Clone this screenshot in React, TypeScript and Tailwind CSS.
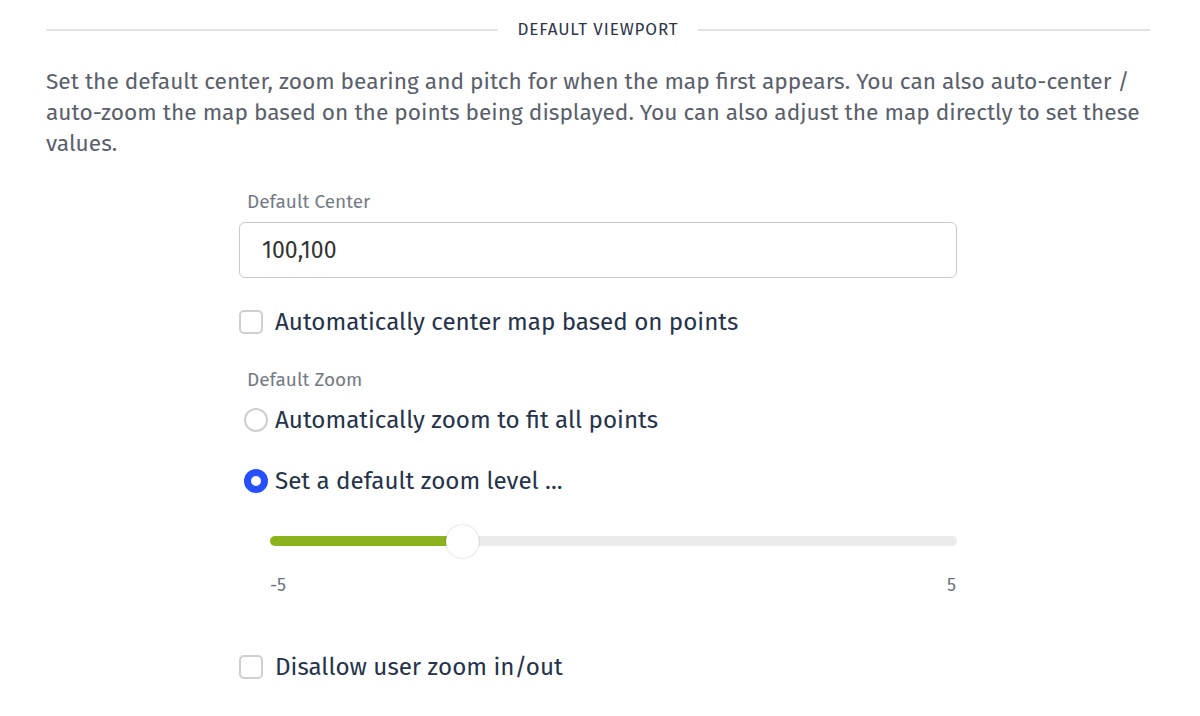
import { useState } from 'react';

const FONT = "font-['Fira_Sans','Noto_Sans','Open_Sans',sans-serif]";

function Checkbox({ label, checked, onChange }: { label: string; checked: boolean; onChange: () => void }) {
  return (
    <label className="flex items-center cursor-pointer select-none">
      <span
        onClick={onChange}
        className={`w-[24px] h-[24px] rounded-[5px] border-2 ${checked ? 'bg-[#2650ff] border-[#2650ff]' : 'bg-white border-[#cfcfcf]'}`}
      />
      <span className="ml-[12px] text-[24.2px] leading-[28px] text-[#26334a]">{label}</span>
    </label>
  );
}

function Radio({ label, checked, onChange }: { label: string; checked: boolean; onChange: () => void }) {
  return (
    <label className="flex items-center cursor-pointer select-none" onClick={onChange}>
      <span
        className={`ml-[5px] w-[24px] h-[24px] rounded-full ${checked ? 'border-[7px] border-[#2650ff] bg-white' : 'border-2 border-[#cfcfcf] bg-white'}`}
      />
      <span className="ml-[7px] text-[24.2px] leading-[28px] text-[#26334a]">{label}</span>
    </label>
  );
}

export default function App() {
  const [centro, setCentro] = useState('100,100');
  const [autoCentro, setAutoCentro] = useState(false);
  const [modoZoom, setModoZoom] = useState<'auto' | 'nivel'>('nivel');
  const [bloquearZoom, setBloquearZoom] = useState(false);
  const zoom = -2.2;
  const pct = ((zoom + 5) / 10) * 100;

  return (
    <div className={`${FONT} bg-white w-[1200px] h-[716px] pl-[46px] pr-[50px] pt-[19px]`}>
      <div className="flex items-center h-[22px]">
        <div className="flex-1 h-[2px] bg-[#e2e3e5]" />
        <span className="px-[19px] text-[17px] tracking-[0.9px] text-[#2c3649] uppercase">Default Viewport</span>
        <div className="flex-1 h-[2px] bg-[#e2e3e5]" />
      </div>

      <p className="mt-[25px] text-[22.7px] leading-[31px] text-[#5a606b]">
        Set the default center, zoom bearing and pitch for when the map first appears. You can also auto-center /
        auto-zoom the map based on the points being displayed. You can also adjust the map directly to set these
        values.
      </p>

      <div className="w-[718px] mx-auto mt-[32px]">
        <div className="text-[19px] leading-[22px] text-[#757b85] pl-[8px]">Default Center</div>
        <input
          value={centro}
          onChange={(e) => setCentro(e.target.value)}
          className="mt-[9px] w-full h-[56px] border border-[#c9c9c9] rounded-[6px] px-[22px] text-[23px] text-[#333] outline-none"
        />

        <div className="mt-[30px]">
          <Checkbox label="Automatically center map based on points" checked={autoCentro} onChange={() => setAutoCentro(!autoCentro)} />
        </div>

        <div className="mt-[33px] text-[19px] leading-[22px] text-[#757b85] pl-[8px]">Default Zoom</div>
        <div className="mt-[15px]">
          <Radio label="Automatically zoom to fit all points" checked={modoZoom === 'auto'} onChange={() => setModoZoom('auto')} />
        </div>
        <div className="mt-[33px]">
          <Radio label="Set a default zoom level ..." checked={modoZoom === 'nivel'} onChange={() => setModoZoom('nivel')} />
        </div>

        <div className="ml-[31px] mt-[41px]">
          <div className="relative h-[10px] rounded-full bg-[#ebebec]">
            <div className="h-full rounded-full bg-[#8cb31e]" style={{ width: `${pct}%` }} />
            <div
              className="absolute top-1/2 w-[33px] h-[33px] -ml-[16px] -mt-[16.5px] rounded-full bg-white shadow-[0_0_2px_rgba(0,0,0,0.25)]"
              style={{ left: `${pct}%` }}
            />
          </div>
          <div className="mt-[29px] flex justify-between text-[18px] leading-[20px] text-[#6d737c]">
            <span>-5</span>
            <span className="mr-[1px]">5</span>
          </div>
        </div>

        <div className="mt-[58px]">
          <Checkbox label="Disallow user zoom in/out" checked={bloquearZoom} onChange={() => setBloquearZoom(!bloquearZoom)} />
        </div>
      </div>
    </div>
  );
}
